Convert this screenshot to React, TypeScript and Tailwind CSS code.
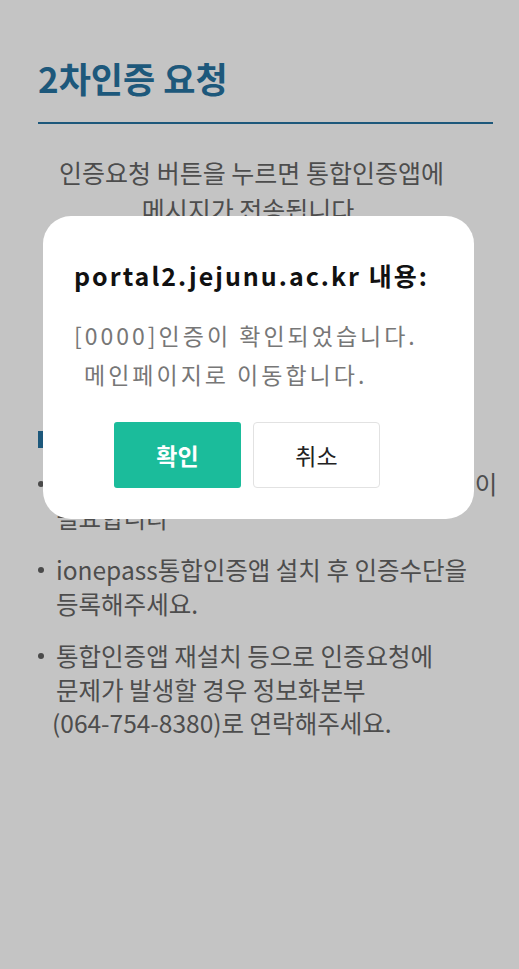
import React from "react";

const font = { fontFamily: '"Noto Sans CJK KR", "Noto Sans", sans-serif' };

const Bullet: React.FC<{ children: React.ReactNode }> = ({ children }) => (
  <li className="flex gap-[12px]">
    <span className="mt-[14px] h-[6px] w-[6px] shrink-0 rounded-full bg-[#4a4a4a]" />
    <span>{children}</span>
  </li>
);

export default function App() {
  return (
    <div className="relative min-h-[969px] w-full overflow-hidden bg-[#c4c4c4]" style={font}>
      <div className="px-[38px] pt-[54px]">
        <h1 className="text-[35px] font-bold leading-[48px] text-[#1d587b]">
          2차인증 요청
        </h1>
        <div className="-mr-[12px] mt-[20px] h-[2px] bg-[#1d587b]" />
        <p className="mt-[30px] pr-[16px] text-center text-[25px] leading-[37px] text-[#4d4d4d]">
          인증요청 버튼을 누르면 통합인증앱에
          <br />
          메시지가 전송됩니다.
        </p>

        <div className="mt-[196px] flex h-[30px] items-center gap-[10px]">
          <span className="h-[17px] w-[6px] bg-[#1d587b]" />
          <span className="text-[22px] font-bold text-[#333]">유의사항</span>
        </div>
        <ul className="mt-[13px] flex flex-col gap-[19px] text-[24.5px] leading-[33.5px] text-[#4d4d4d]">
          <Bullet>
            <span className="whitespace-nowrap">2차인증을 위하여 통합인증앱 설치와 등록이</span>
            <br />
            필요합니다
          </Bullet>
          <Bullet>
            ionepass통합인증앱 설치 후 인증수단을
            <br />
            등록해주세요.
          </Bullet>
          <Bullet>
            통합인증앱 재설치 등으로 인증요청에
            <br />
            문제가 발생할 경우 정보화본부
            <br />
            <span className="-ml-[4px]">(064-754-8380)로 연락해주세요.</span>
          </Bullet>
        </ul>
      </div>

      <div className="absolute left-[43px] top-[216px] h-[303px] w-[431px] rounded-[28px] bg-white pl-[31px] pt-[42px]">
        <h2 className="whitespace-nowrap text-[25px] font-bold leading-[34px] tracking-[2px] text-[#111]">
          portal2.jejunu.ac.kr 내용:
        </h2>
        <p className="mt-[24px] whitespace-nowrap text-[23px] leading-[39px] tracking-[3px] text-[#777]">
          [0000]인증이 확인되었습니다.
          <br />
          <span className="ml-[10px]">메인페이지로 이동합니다.</span>
        </p>
        <div className="ml-[40px] mt-[28px] flex gap-[12px]">
          <button className="h-[66px] w-[127px] rounded-[3px] bg-[#1bbc9b] text-[23px] font-bold text-white">
            확인
          </button>
          <button className="h-[66px] w-[127px] rounded-[4px] border border-[#e2e2e2] bg-white text-[23px] text-[#222]">
            취소
          </button>
        </div>
      </div>
    </div>
  );
}
